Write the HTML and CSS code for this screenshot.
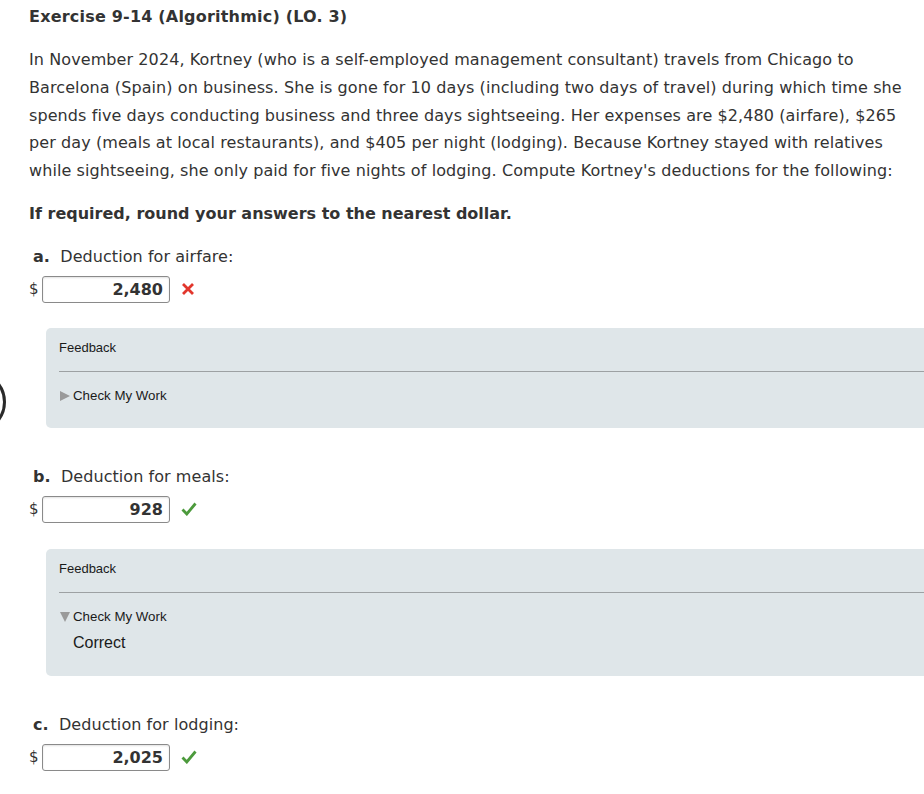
FILE: index.html
```html
<!DOCTYPE html>
<html>
<head>
<meta charset="utf-8">
<link rel="stylesheet" href="styles.css">
</head>
<body>
<div class="edge-ring"></div>
<main class="page">
  <h1 class="title">Exercise 9-14 (Algorithmic) (LO. 3)</h1>
  <p class="problem">In November 2024, Kortney (who is a self-employed management consultant) travels from Chicago to<br>Barcelona (Spain) on business. She is gone for 10 days (including two days of travel) during which time she<br>spends five days conducting business and three days sightseeing. Her expenses are $2,480 (airfare), $265<br>per day (meals at local restaurants), and $405 per night (lodging). Because Kortney stayed with relatives<br>while sightseeing, she only paid for five nights of lodging. Compute Kortney's deductions for the following:</p>
  <p class="instruction">If required, round your answers to the nearest dollar.</p>

  <section class="part part-a">
    <div class="label"><b>a.</b>&nbsp; Deduction for airfare:</div>
    <div class="answer-row">
      <span class="dollar">$</span>
      <span class="answer">2,480</span>
      <svg class="mark" width="14" height="14" viewBox="0 0 14 14"><path d="M2 2 L12 12 M12 2 L2 12" stroke="#e2362c" stroke-width="2.8" stroke-linecap="butt"/></svg>
    </div>
    <div class="feedback">
      <div class="fb-title">Feedback</div>
      <div class="fb-rule"></div>
      <div class="fb-check"><span class="tri-right"></span>Check My Work</div>
    </div>
  </section>

  <section class="part part-b">
    <div class="label"><b>b.</b>&nbsp; Deduction for meals:</div>
    <div class="answer-row">
      <span class="dollar">$</span>
      <span class="answer">928</span>
      <svg class="mark" width="16" height="14" viewBox="0 0 16 14"><path d="M1.5 7.5 L5.8 12 L14.5 1.5" fill="none" stroke="#4c9a3c" stroke-width="2.8" stroke-linejoin="miter"/></svg>
    </div>
    <div class="feedback">
      <div class="fb-title">Feedback</div>
      <div class="fb-rule"></div>
      <div class="fb-check"><span class="tri-down"></span>Check My Work</div>
      <div class="fb-result">Correct</div>
    </div>
  </section>

  <section class="part part-c">
    <div class="label"><b>c.</b>&nbsp; Deduction for lodging:</div>
    <div class="answer-row">
      <span class="dollar">$</span>
      <span class="answer">2,025</span>
      <svg class="mark" width="16" height="14" viewBox="0 0 16 14"><path d="M1.5 7.5 L5.8 12 L14.5 1.5" fill="none" stroke="#4c9a3c" stroke-width="2.8" stroke-linejoin="miter"/></svg>
    </div>
  </section>
</main>
</body>
</html>
```
FILE: styles.css
```css
html, body {
  margin: 0;
  padding: 0;
  overflow: hidden;
  background: #fff;
}
body {
  color: #333;
  font-family: "DejaVu Sans", Verdana, sans-serif;
  position: relative;
  min-height: 794px;
}
.edge-ring {
  position: absolute;
  left: -56px;
  top: 371px;
  width: 56px;
  height: 56px;
  border: 3px solid #2a2a2a;
  border-radius: 50%;
}
.page {
  padding: 7px 0 0 29px;
}
.title {
  font-size: 16px;
  letter-spacing: 0.2px;
  font-weight: bold;
  line-height: 20px;
  margin: 0;
}
.problem {
  font-size: 16px;
  letter-spacing: 0.09px;
  line-height: 27.8px;
  margin: 19px 0 0 0;
  white-space: nowrap;
}
.instruction {
  font-size: 16px;
  letter-spacing: 0;
  font-weight: bold;
  line-height: 28px;
  margin: 15px 0 0 0;
}
.label {
  font-size: 16px;
  letter-spacing: 0.06px;
  line-height: 28px;
  padding-left: 4px;
}
.part-a { margin-top: 15px; }
.part-b { margin-top: 35px; }
.part-c { margin-top: 35px; }
.answer-row {
  display: flex;
  align-items: center;
  margin-top: 5px;
  height: 27px;
}
.dollar {
  font-size: 15px;
  width: 13px;
}
.answer {
  box-sizing: border-box;
  width: 128px;
  height: 27px;
  border: 1px solid #8a8a8a;
  border-radius: 3px;
  box-shadow: inset 0 1px 2px rgba(0,0,0,0.12);
  text-align: right;
  font-weight: bold;
  font-size: 16px;
  line-height: 25px;
  padding-right: 6px;
  color: #333;
}
.mark {
  margin-left: 11px;
}
.feedback {
  margin: 25px -60px 0 17px;
  background: #dfe6e9;
  border-radius: 5px;
  padding: 12px 0 24px 13px;
  font-family: "Liberation Sans", Arial, sans-serif;
  color: #1a1a1a;
}
.part-b .feedback {
  margin-top: 26px;
  padding-bottom: 23px;
}
.fb-title {
  font-size: 13px;
  line-height: 16px;
}
.fb-rule {
  height: 1px;
  background: #9da1a3;
  margin-top: 15px;
}
.fb-check {
  font-size: 13.3px;
  line-height: 16px;
  margin-top: 16px;
  display: flex;
  align-items: center;
}
.tri-right {
  width: 0;
  height: 0;
  border-top: 5px solid transparent;
  border-bottom: 5px solid transparent;
  border-left: 10px solid #9a9a9a;
  margin: 0 3px 0 1px;
}
.tri-down {
  width: 0;
  height: 0;
  border-left: 5px solid transparent;
  border-right: 5px solid transparent;
  border-top: 10px solid #9a9a9a;
  margin: 0 3px 0 1px;
}
.fb-result {
  font-size: 16px;
  line-height: 20px;
  margin-top: 8px;
  padding-left: 14px;
}
```
